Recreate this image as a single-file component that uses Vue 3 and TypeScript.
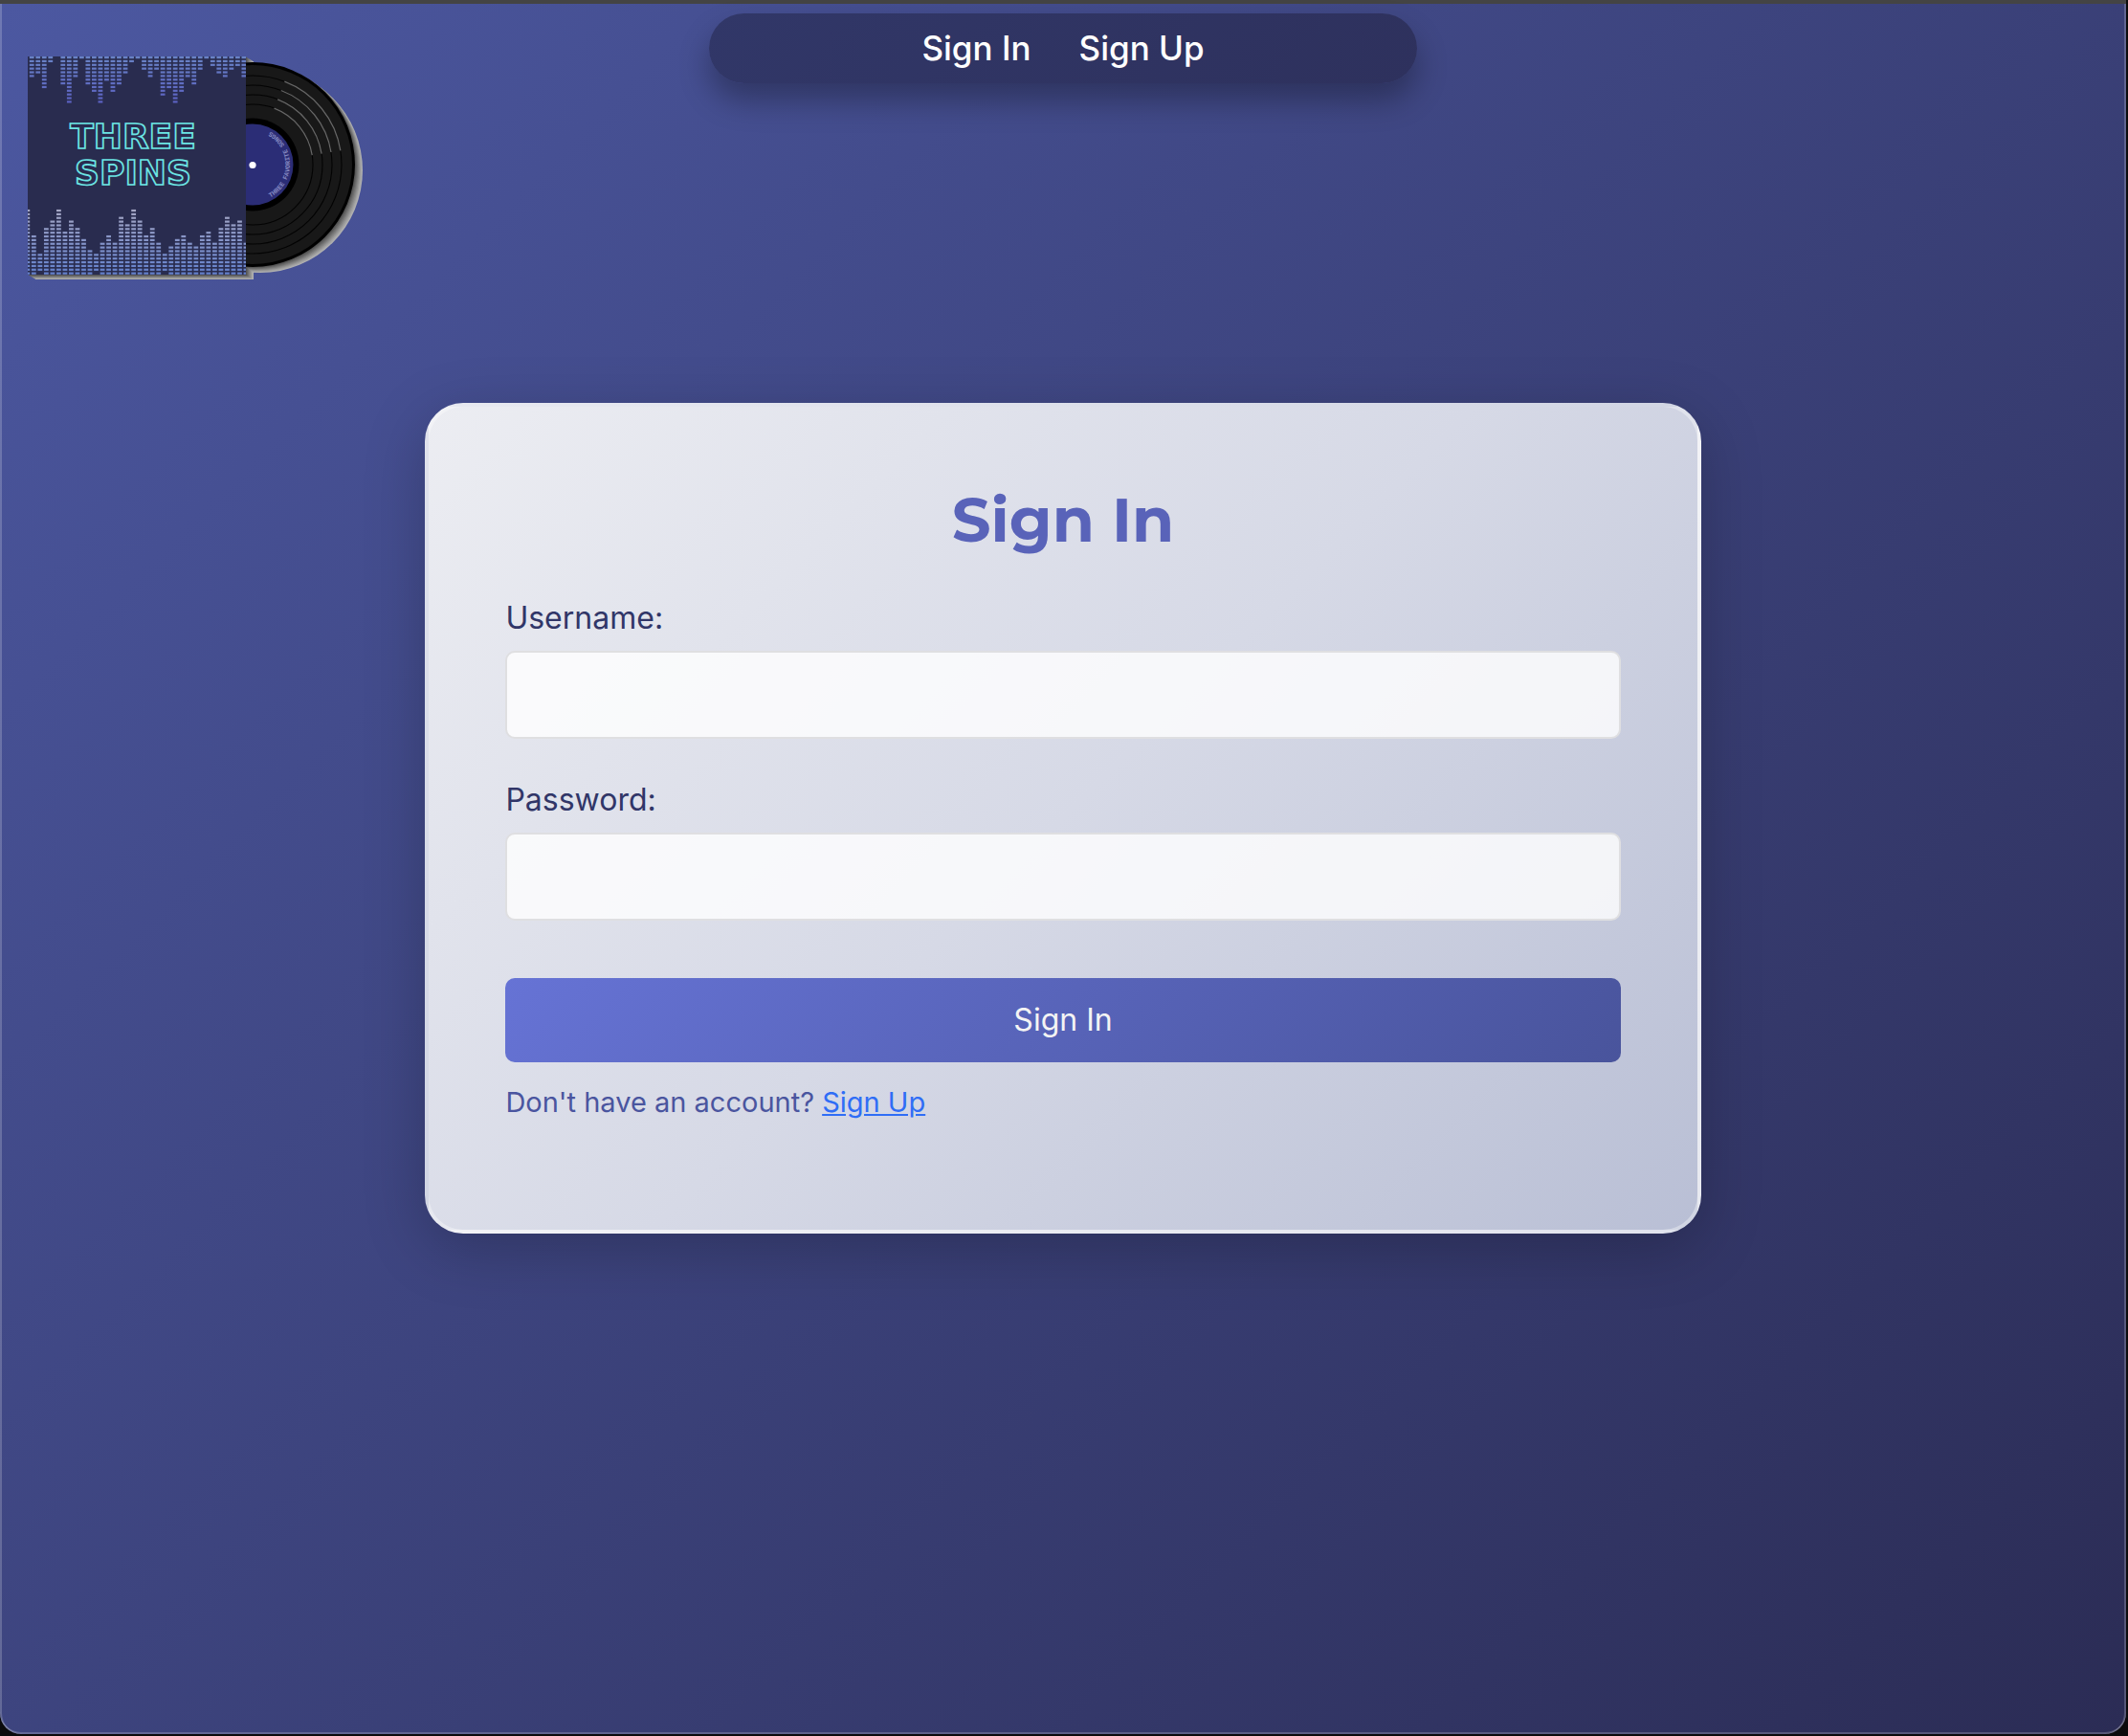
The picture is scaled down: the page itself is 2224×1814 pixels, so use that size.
<script setup lang="ts">
import { ref } from 'vue'

interface Bar {
  x: number
  y: number
  width: number
  height: number
}

const username = ref('')
const password = ref('')

const hanging = [6, 5, 9, 2, 0, 8, 13, 6, 1, 8, 10, 13, 7, 10, 8, 5, 2, 1, 4, 6, 4, 11, 9, 13, 10, 6, 8, 4, 1, 3, 5, 6, 4, 3, 6]
const rising = [18, 11, 6, 13, 15, 18, 12, 15, 13, 10, 7, 6, 9, 11, 9, 16, 14, 18, 15, 11, 13, 9, 6, 8, 10, 11, 9, 8, 11, 12, 9, 13, 16, 14, 15, 9]

const pitchX = 6.52
const pitchY = 3.86

function column(x: number, first: number, count: number): Bar[] {
  return Array.from({ length: count }, (_, i) => ({ x, y: first + i * pitchY, width: 4.8, height: 2.2 }))
}

const topBars: Bar[] = hanging.flatMap((n, i) => column(1.8 + i * pitchX, 0, n))
const bottomBars: Bar[] = rising.flatMap((n, i) => {
  const rows = n === 6 ? 5 : n
  return column(-2.6 + i * pitchX, 228 - n * pitchY + 1.4, rows)
})

const depth = ['#b0b0b0', '#a6a6a6', '#9a9a9a', '#8c8c8c', '#7e7e7e', '#707070', '#626262', '#545454']
const grooves = [63, 73, 83, 93]

function shine(r: number): string {
  const point = (deg: number) => {
    const a = (deg * Math.PI) / 180
    return `${235 + r * Math.cos(a)} ${113 + r * Math.sin(a)}`
  }
  return `M${point(-69)}A${r} ${r} 0 0 1 ${point(-9)}`
}
</script>

<template>
  <div class="page">
    <header class="top">
      <a class="logo" href="#" aria-label="Three Spins">
        <svg width="352" height="236" viewBox="0 0 352 236">
          <defs>
            <linearGradient id="fade-top" gradientUnits="userSpaceOnUse" x1="0" y1="0" x2="0" y2="50">
              <stop offset="0" stop-color="#6983c6" />
              <stop offset="1" stop-color="#5a5fc0" />
            </linearGradient>
            <linearGradient id="fade-bottom" gradientUnits="userSpaceOnUse" x1="0" y1="158" x2="0" y2="228">
              <stop offset="0" stop-color="#a7a8c4" />
              <stop offset="1" stop-color="#6380cc" />
            </linearGradient>
            <clipPath id="sleeve"><rect width="228" height="228" /></clipPath>
            <path id="label-arc" d="M235 152A39 39 0 0 0 235 74" />
          </defs>
          <g v-for="(tone, i) in depth" :key="tone" :fill="tone">
            <rect :x="8 - i" :y="5 - i * 0.6" width="228" height="228" />
            <circle :cx="243 - i" :cy="119 - i * 0.75" r="107" />
          </g>
          <circle cx="235" cy="113" r="107" fill="#000" />
          <circle cx="235" cy="113" r="104" fill="#181818" />
          <g fill="none" stroke="#030303" stroke-width="1.1">
            <circle v-for="r in grooves" :key="r" cx="235" cy="113" :r="r" />
          </g>
          <g fill="none" stroke="#666" stroke-width="1.3">
            <path v-for="r in grooves" :key="r" :d="shine(r)" />
          </g>
          <circle cx="235" cy="113" r="48.5" fill="#000" />
          <circle cx="235" cy="113" r="42.5" fill="#2b2d76" />
          <text class="label-text"><textPath href="#label-arc" startOffset="50%" text-anchor="middle">THREE FAVORITE SONGS</textPath></text>
          <circle cx="235" cy="113.500" r="3.600" fill="#fff" />
          <rect width="228" height="228" fill="#292c4f" />
          <g clip-path="url(#sleeve)">
            <g fill="url(#fade-top)">
              <rect v-for="(b, i) in topBars" :key="i" v-bind="b" />
            </g>
            <g fill="url(#fade-bottom)">
              <rect v-for="(b, i) in bottomBars" :key="i" v-bind="b" />
            </g>
          </g>
          <text class="brand" x="110" y="96">THREE</text>
          <text class="brand" x="110" y="134">SPINS</text>
        </svg>
      </a>
      <nav class="nav">
        <a href="#signin">Sign In</a>
        <a href="#signup">Sign Up</a>
      </nav>
    </header>

    <main class="card">
      <h1>Sign In</h1>
      <form @submit.prevent>
        <div class="field">
          <label for="username">Username:</label>
          <input id="username" v-model="username" type="text" autocomplete="username" />
        </div>
        <div class="field">
          <label for="password">Password:</label>
          <input id="password" v-model="password" type="password" autocomplete="current-password" />
        </div>
        <button type="submit">Sign In</button>
      </form>
      <p>Don't have an account? <a href="#signup">Sign Up</a></p>
    </main>
  </div>
</template>

<style>
body {
  margin: 0;
  background: #0b0b0d;
}
</style>

<style scoped>
.page {
  box-sizing: border-box;
  min-height: calc(100vh - 2px);
  margin-right: 2px;
  padding-bottom: 80px;
  border-top: 4px solid #444;
  border-radius: 0 0 22px 22px;
  background: linear-gradient(135deg, #4c58a1, #2b2c55);
  box-shadow: inset 0 -2px rgba(255, 255, 255, 0.2), inset 2px 0 rgba(255, 255, 255, 0.2), inset -2px 0 rgba(255, 255, 255, 0.2);
  font-family: Inter, "Liberation Sans", sans-serif;
}

.top {
  display: grid;
  grid-template-columns: repeat(3, 1fr);
  align-items: start;
}

.logo {
  padding: 55px 0 0 29px;
}

.logo svg {
  display: block;
}

.brand {
  font: 700 36px "DejaVu Sans", sans-serif;
  text-anchor: middle;
  fill: #292c4f;
  stroke: #6ce5e4;
  stroke-width: 1.7px;
}

.label-text {
  font: 700 7px "Liberation Mono", monospace;
  fill: #8488c0;
}

.nav {
  display: flex;
  justify-content: center;
  gap: 50px;
  margin-top: 10px;
  padding: 14px 0;
  border-radius: 40px;
  background: linear-gradient(135deg, #313768, #2e315d);
  box-shadow: 0 18px 32px rgba(0, 0, 0, 0.3);
}

.nav a {
  color: #fff;
  font-size: 35px;
  font-weight: 500;
  line-height: 45px;
  text-decoration: none;
}

.card {
  box-sizing: border-box;
  width: 60%;
  margin: 126px auto 0;
  padding: 80px 80px 115px;
  border: 4px solid rgba(255, 255, 255, 0.35);
  border-radius: 40px;
  background: linear-gradient(135deg, #ecedf2, #d6d9e6 50%, #b9bfd5);
  box-shadow: 0 16px 64px rgba(0, 0, 0, 0.22);
}

h1 {
  margin: 0 0 43px;
  color: #5963b9;
  font-family: Montserrat, Inter, sans-serif;
  font-size: 64px;
  font-weight: 700;
  line-height: 76px;
  text-align: center;
}

.field {
  display: flex;
  flex-direction: column;
  gap: 12px;
  margin-bottom: 42px;
}

.field + .field {
  margin-bottom: 60px;
}

label {
  color: #313668;
  font-size: 32px;
  line-height: 44px;
}

input {
  box-sizing: border-box;
  height: 92px;
  padding: 0 24px;
  border: 2px solid #dfdfe1;
  border-radius: 10px;
  background: rgba(255, 255, 255, 0.8);
  color: #313668;
  font: 32px Inter, sans-serif;
}

button {
  display: block;
  width: 100%;
  height: 88px;
  padding: 0 0 2px;
  border: 0;
  border-radius: 10px;
  background: linear-gradient(135deg, #6673d5, #49549c);
  color: #f4f4f4;
  font: 32px Inter, sans-serif;
}

p {
  margin: 24px 0 0;
  color: #4a559f;
  font-size: 29px;
  line-height: 36px;
}

p a {
  color: #2f6df6;
}
</style>
